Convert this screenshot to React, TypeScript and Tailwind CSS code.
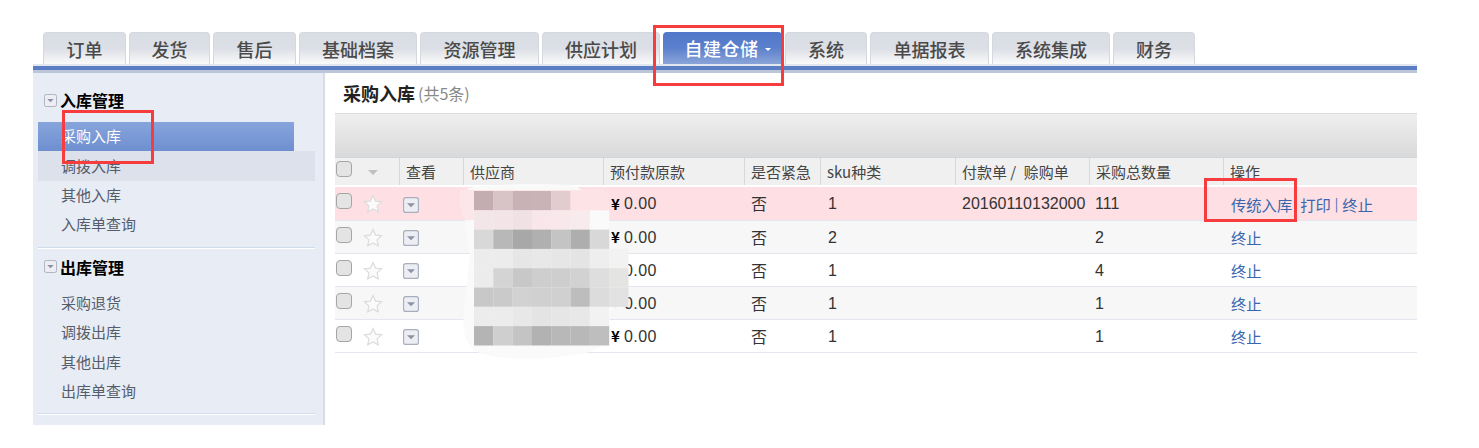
import React from "react";

const tabs = [
  { t: "订单", w: 83 }, { t: "发货", w: 81 }, { t: "售后", w: 83 }, { t: "基础档案", w: 118 },
  { t: "资源管理", w: 119 }, { t: "供应计划", w: 118 }, { t: "自建仓储", w: 119, active: true },
  { t: "系统", w: 82 }, { t: "单据报表", w: 119 }, { t: "系统集成", w: 118 }, { t: "财务", w: 82 },
];

const cols = [64, 64, 140, 141, 76, 135, 134, 134, 194];
const heads = ["", "查看", "供应商", "预付款原款", "是否紧急", "sku种类", "付款单 /\u2002赊购单", "采购总数量", "操作"];

const rows = [
  { h: 34, n: "1", pay: "20160110132000", q: "111", bg: "bg-[#fee0e4]" },
  { h: 33, n: "2", pay: "", q: "2", bg: "bg-[#f7f7f7]" },
  { h: 33, n: "1", pay: "", q: "4", bg: "bg-white" },
  { h: 33, n: "1", pay: "", q: "1", bg: "bg-[#f7f7f7]" },
  { h: 33, n: "1", pay: "", q: "1", bg: "bg-white" },
];

const mosaic: string[][] = [
  ["#c4adb0", "#d8c3c6", "#c9b2b5", "#c8b3b6", "#e3ccd0", "#fde2e6", "#fde2e6"],
  ["#f3e6e8", "#f3e4e7", "#f0e1e4", "#f8e6ea", "#f8e7eb", "#f7ebee", "#fafafa"],
  ["#d8d8d8", "#b8b8b8", "#a8a8a8", "#b0b0b0", "#c4c4c4", "#aeaeae", "#d8d8d8"],
  ["#ececec", "#ececec", "#e6e6e6", "#e8e8e8", "#e6e6e6", "#e4e4e4", "#eeeeee", "#f2f2f2"],
  ["#ececec", "#d4d4d4", "#c8c8c8", "#cecece", "#cecece", "#d2d2d2", "#dedede", "#e4e4e2"],
  ["#c8c8c8", "#cacaca", "#d2d2d2", "#d0d0d0", "#d0d0d0", "#bdbdbd", "#dcdcdc", "#e2e2e2"],
  ["#ececec", "#ececec", "#e8e8e8", "#e4e4e4", "#e6e6e6", "#e8e8e8", "#f2f2f2"],
  ["#b4b4b4", "#cfcfcf", "#c4c4c4", "#b2b2b2", "#b8b8b8", "#b8b8b8", "#bebebe"],
];

function Chevron({ className }: { className: string }) {
  return (
    <svg viewBox="0 0 14 14" className={className}>
      <rect x="0.5" y="0.5" width="13" height="13" rx="2" fill="#eceef3" stroke="#a9aebd" />
      <path d="M3.5 5.5h7L7 9z" fill="#8d93a3" />
    </svg>
  );
}

function Section({ title, items, active, hover }: { title: string; items: string[]; active?: string; hover?: string }) {
  return (
    <div className="border-b border-b-[#cfdcec] shadow-[0_1px_0_#ffffff] ml-[5px] mr-[8px] pb-[7px]">
      <div className="h-[28px] flex items-center pl-[6px] gap-[3px]">
        <Chevron className="w-[13px] h-[13px]" />
        <span className="text-[16px] font-bold text-black leading-none">{title}</span>
      </div>
      <div className="mt-[8px]">
        {items.map((i) => (
          <div
            key={i}
            className={
              "h-[29.4px] flex items-center pl-[23px] pb-[2px] text-[15px] leading-none " +
              (i === active
                ? "w-[256px] bg-gradient-to-b from-[#87a4dc] to-[#6e8fd0] text-white"
                : i === hover
                  ? "bg-[#dde1ec] text-[#555c6c]"
                  : "text-[#555c6c]")
            }
          >
            {i}
          </div>
        ))}
      </div>
    </div>
  );
}

function Row({ r }: { r: (typeof rows)[number] }) {
  const first = r.q === "111";
  return (
    <div className={"flex border-b border-b-[#e3e6ee] text-[#333] pt-[1px] " + r.bg} style={{ height: r.h }}>
      <div className="w-[64px] flex items-center pl-[1px] gap-[11px] pb-[6px]">
        <span className="w-[16px] h-[16px] rounded-[4px] border border-[#a5a5a5] bg-[#e4e4e4]" />
        <svg viewBox="0 0 20 20" className="w-[20px] h-[20px] mt-[6px]">
          <path
            d="M10 1.5l2.6 5.6 6 .7-4.5 4.1 1.2 6L10 15l-5.3 2.9 1.2-6L1.4 7.8l6-.7z"
            fill="#fbfbfb"
            stroke="#dcdcdc"
            strokeWidth="1.2"
          />
        </svg>
      </div>
      <div className="w-[64px] flex items-center pl-[4px]">
        <Chevron className="w-[16px] h-[16px] mt-[1px]" />
      </div>
      <div className="w-[140px]" />
      <div className="w-[141px] flex items-center pl-[8px] text-[16px]">
        <span className="w-[13px] text-black text-[15px] font-bold">¥</span>
        <span className="font-['Liberation_Sans',sans-serif] tracking-[0.4px]">0.00</span>
      </div>
      <div className="w-[76px] flex items-center pl-[7px] pb-[2px] text-[16px]">否</div>
      <div className="w-[135px] flex items-center pl-[8px] text-[16px] font-['Liberation_Sans',sans-serif]">{r.n}</div>
      <div className="w-[134px] flex items-center pl-[7px] text-[16px] font-['Liberation_Sans',sans-serif]">{r.pay}</div>
      <div className="w-[134px] flex items-center pl-[6px] text-[16px] font-['Liberation_Sans',sans-serif]">{r.q}</div>
      <div className="w-[194px] flex items-center pl-[8px] text-[15.3px] text-[#3a66ad] whitespace-nowrap">
        {first ? (
          <>
            <span>传统入库</span>
            <span className="ml-[8px]">打印</span>
            <span className="mx-[4px] text-[13px]">|</span>
            <span>终止</span>
          </>
        ) : (
          <span>终止</span>
        )}
      </div>
    </div>
  );
}

export default function App() {
  return (
    <div className="relative w-[1479px] h-[448px] bg-white overflow-hidden pt-[32px] pl-[33px] font-['Noto_Sans_CJK_SC','Liberation_Sans',sans-serif]">
      <div className="w-[1384px]">
        <div className="flex gap-[3px] pl-[10px] h-[32px]">
          {tabs.map((t) =>
            t.active ? (
              <div
                key={t.t}
                style={{ width: t.w }}
                className="rounded-t-[4px] bg-gradient-to-b from-[#5077c9] via-[#5c80cc] to-[#8aa4d8] text-white text-[18px] flex items-center justify-center font-medium leading-none pl-[10px]"
              >
                <span className="tracking-[0.5px]">{t.t}</span>
                <span className="ml-[6px] mt-[3px] border-x-[3px] border-x-transparent border-t-[3px] border-t-white" />
              </div>
            ) : (
              <div
                key={t.t}
                style={{ width: t.w }}
                className="rounded-t-[4px] border border-b-0 border-[#d5d8de] bg-gradient-to-b from-[#d9dde4] via-[#dcdfe6] to-[#fafafa] text-[#4a4a4a] text-[18px] font-medium flex items-center justify-center leading-none"
              >
                {t.t}
              </div>
            ),
          )}
        </div>
        <div className="h-[9px] bg-[#e2e6ee] pt-[2px]">
          <div className="h-[4px] bg-[#5b7dc4]" />
          <div className="h-[3px] bg-[#bcc6da]" />
        </div>

        <div className="flex">
          <div className="w-[292px] h-[352px] bg-[#e8ecf4] border-r-2 border-r-[#d9dce2] pt-[13px] shrink-0">
            <Section title="入库管理" items={["采购入库", "调拨入库", "其他入库", "入库单查询"]} active="采购入库" hover="调拨入库" />
            <div className="h-[5px]" />
            <Section title="出库管理" items={["采购退货", "调拨出库", "其他出库", "出库单查询"]} />
          </div>

          <div className="flex-1 pl-[10px]">
            <div className="h-[40px] flex items-center pl-[8px] pb-[1px]">
              <span className="text-[18px] font-bold text-[#222] leading-none">采购入库</span>
              <span className="text-[16px] text-[#888] ml-[3px] leading-none">(共5条)</span>
            </div>
            <div className="h-[45px] bg-gradient-to-b from-[#efefef] to-[#d9d9d9] border-t border-t-[#dcdcdc] border-b border-b-[#cfd6de]" />
            <div className="flex h-[29px] bg-[#f0f0f0] border-b-2 border-b-white text-[15px] text-[#444]">
              {heads.map((h, i) => (
                <div
                  key={i}
                  style={{ width: cols[i] }}
                  className={"flex items-center leading-none whitespace-pre " + (i ? "border-l border-l-[#d8d8d8] pl-[6px]" : "pl-[1px] gap-[11px]")}
                >
                  {i === 0 ? (
                    <>
                      <span className="w-[16px] h-[16px] rounded-[4px] border border-[#a5a5a5] bg-[#e4e4e4] -mt-[6px]" />
                      <span className="ml-[5px] border-x-[5px] border-x-transparent border-t-[5px] border-t-[#c0c0c0] mt-[2px]" />
                    </>
                  ) : (
                    h
                  )}
                </div>
              ))}
            </div>
            {rows.map((r, i) => (
              <Row key={i} r={r} />
            ))}
          </div>
        </div>
      </div>

      {/* censoring mosaic over the supplier column */}
      <svg className="absolute left-[460px] top-[182px]" width="172" height="182" viewBox="0 0 172 182">
        <path
          d="M8 6 Q50 0 110 3 Q130 6 128 30 Q146 50 150 66 L167 86 L167 124 L150 130 L150 140 Q150 168 120 172 Q60 182 22 172 Q0 165 4 130 L10 70 Q0 30 8 6z"
          fill="#fafafa"
          opacity="0.96"
        />
        <path d="M0 8 H144 V38 H4 Q-2 20 0 8z" fill="#fde6ea" />
        {mosaic.map((row, y) =>
          row.map((c, x) => <rect key={x + "-" + y} x={14 + x * 19.3} y={9 + y * 19.3} width="19.4" height="19.4" fill={c} />),
        )}
      </svg>

      {/* red annotation boxes */}
      <div className="absolute left-[653px] top-[25px] w-[131px] h-[61px] border-[3px] border-[#f63c3c]" />
      <div className="absolute left-[62px] top-[110px] w-[92px] h-[54px] border-[3px] border-[#f63c3c]" />
      <div className="absolute left-[1204px] top-[178px] w-[93px] h-[44px] border-[3px] border-[#f63c3c]" />
    </div>
  );
}
